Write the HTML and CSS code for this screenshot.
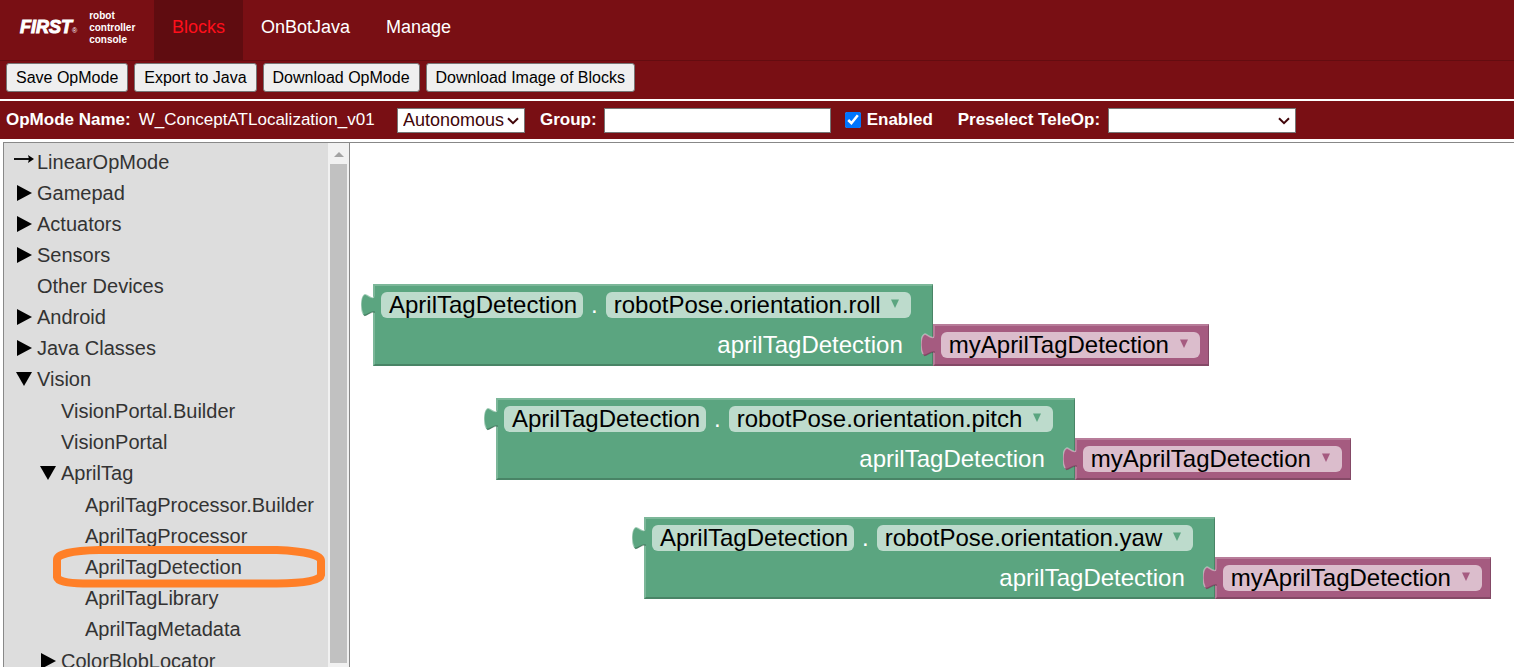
FILE: index.html
```html
<!DOCTYPE html>
<html lang="en">
<head>
<meta charset="utf-8">
<title>Blocks - robot controller console</title>
<link rel="stylesheet" href="styles.css">
</head>
<body>
<svg class="defs" aria-hidden="true">
  <symbol id="right" viewBox="0 0 16 16"><path d="M1 0L16 8L1 16Z"/></symbol>
  <symbol id="down" viewBox="0 0 16 16"><path d="M0 1H16L8 15Z"/></symbol>
  <symbol id="chevron" viewBox="0 0 12 8"><path d="M1 1.3L6 6.2L11 1.3" fill="none" stroke="currentColor" stroke-width="2"/></symbol>
  <symbol id="caret" viewBox="0 0 10 10"><path d="M1 0.5H9L5 9Z"/></symbol>
  <symbol id="tab" viewBox="0 0 14 26"><path d="M14 4C12 8 8 3 4 2C1 3 0 8 0 13C0 18 1 23 4 24C8 23 12 18 14 21Z"/><path d="M13 5C10 7 7 3 4 2C1 3 0 8 0 13C0 17 1 20 2 22" fill="none" stroke="#fff" stroke-opacity=".4" stroke-width="1.5"/><path d="M3 23.5C7 23 11 18 14 20.5" fill="none" stroke="#000" stroke-opacity=".22" stroke-width="1.5"/></symbol>
</svg>
<header class="header">
  <nav class="nav">
    <a class="brand" href="#"><span class="logo">FIRST<small>®</small></span><span class="product">robot<br>controller<br>console</span></a>
    <a class="tab active" href="#">Blocks</a>
    <a class="tab" href="#">OnBotJava</a>
    <a class="tab" href="#">Manage</a>
  </nav>
  <div class="actions">
    <button>Save OpMode</button>
    <button>Export to Java</button>
    <button>Download OpMode</button>
    <button>Download Image of Blocks</button>
  </div>
</header>
<form class="options">
  <div class="name"><b>OpMode Name:</b><span>W_ConceptATLocalization_v01</span></div>
  <span class="pick flavor"><select aria-label="Flavor"><option>Autonomous</option></select><svg><use href="#chevron"/></svg></span>
  <label class="strong" for="group">Group:</label>
  <input class="group" id="group" type="text">
  <input class="check" id="enabled" type="checkbox" checked>
  <label class="strong enabled" for="enabled">Enabled</label>
  <label class="strong" for="teleop">Preselect TeleOp:</label>
  <span class="pick teleop"><select id="teleop"><option></option></select><svg><use href="#chevron"/></svg></span>
</form>
<main class="main">
  <aside class="toolbox">
    <ul class="tree">
      <li><div class="row"><svg class="arrow" viewBox="0 0 20 8"><path d="M0 4H17" stroke="#111" stroke-width="2"/><path d="M14 0L20 4L14 8L15 4Z"/></svg>LinearOpMode</div></li>
      <li><div class="row"><svg><use href="#right"/></svg>Gamepad</div></li>
      <li><div class="row"><svg><use href="#right"/></svg>Actuators</div></li>
      <li><div class="row"><svg><use href="#right"/></svg>Sensors</div></li>
      <li><div class="row">Other Devices</div></li>
      <li><div class="row"><svg><use href="#right"/></svg>Android</div></li>
      <li><div class="row"><svg><use href="#right"/></svg>Java Classes</div></li>
      <li><div class="row"><svg><use href="#down"/></svg>Vision</div>
        <ul>
          <li><div class="row">VisionPortal.Builder</div></li>
          <li><div class="row">VisionPortal</div></li>
          <li><div class="row"><svg><use href="#down"/></svg>AprilTag</div>
            <ul>
              <li><div class="row">AprilTagProcessor.Builder</div></li>
              <li><div class="row">AprilTagProcessor</div></li>
              <li><div class="row">AprilTagDetection<svg class="ring" viewBox="0 0 272 42"><path d="M46 4H224Q268 6 268 15V29Q267 37 224 37.500H30Q5 37 4 31V14Q4 5 46 4Z" fill="none" stroke="#ff7f27" stroke-width="8"/></svg></div></li>
              <li><div class="row">AprilTagLibrary</div></li>
              <li><div class="row">AprilTagMetadata</div></li>
            </ul>
          </li>
          <li><div class="row"><svg><use href="#right"/></svg>ColorBlobLocator</div></li>
        </ul>
      </li>
    </ul>
    <div class="scrollbar"><svg viewBox="0 0 10 5"><path d="M5 0L10 5H0Z" fill="#a3a3a3"/></svg><div class="thumb"></div></div>
  </aside>
  <section class="workspace">
    <div class="block roll">
      <div class="getter"><svg class="plug"><use href="#tab"/></svg>
        <div class="fields"><span class="field">AprilTagDetection</span><span class="dot">.</span><span class="field drop"><select aria-label="Property"><option>robotPose.orientation.roll</option></select><svg><use href="#caret"/></svg></span></div>
        <div class="argument">aprilTagDetection</div>
      </div>
      <div class="variable"><svg class="plug"><use href="#tab"/></svg><span class="field drop"><select aria-label="Variable"><option>myAprilTagDetection</option></select><svg><use href="#caret"/></svg></span></div>
    </div>
    <div class="block pitch">
      <div class="getter"><svg class="plug"><use href="#tab"/></svg>
        <div class="fields"><span class="field">AprilTagDetection</span><span class="dot">.</span><span class="field drop"><select aria-label="Property"><option>robotPose.orientation.pitch</option></select><svg><use href="#caret"/></svg></span></div>
        <div class="argument">aprilTagDetection</div>
      </div>
      <div class="variable"><svg class="plug"><use href="#tab"/></svg><span class="field drop"><select aria-label="Variable"><option>myAprilTagDetection</option></select><svg><use href="#caret"/></svg></span></div>
    </div>
    <div class="block yaw">
      <div class="getter"><svg class="plug"><use href="#tab"/></svg>
        <div class="fields"><span class="field">AprilTagDetection</span><span class="dot">.</span><span class="field drop"><select aria-label="Property"><option>robotPose.orientation.yaw</option></select><svg><use href="#caret"/></svg></span></div>
        <div class="argument">aprilTagDetection</div>
      </div>
      <div class="variable"><svg class="plug"><use href="#tab"/></svg><span class="field drop"><select aria-label="Variable"><option>myAprilTagDetection</option></select><svg><use href="#caret"/></svg></span></div>
    </div>
  </section>
</main>
</body>
</html>
```
FILE: styles.css
```css
* { box-sizing: border-box; }
body {
  margin: 0;
  height: 100vh;
  overflow: hidden;
  display: flex;
  flex-direction: column;
  background: #fff;
  font-family: "Liberation Sans", Arial, sans-serif;
  color: #333;
}
.defs { position: absolute; width: 0; height: 0; }
.header, .options { background: #790f14; color: #fff; }
.nav { display: flex; height: 61px; border-bottom: 1px solid #640c10; }
.nav a { color: #fff; text-decoration: none; }
.brand { display: flex; align-items: center; gap: 12px; width: 154px; padding-left: 20px; padding-bottom: 5px; }
.logo { font-size: 18px; font-weight: bold; font-style: italic; -webkit-text-stroke: 1px #fff; }
.logo small { font-size: 7px; font-style: normal; font-weight: normal; -webkit-text-stroke: 0; }
.product { font-size: 10px; line-height: 12px; font-weight: bold; }
.tab { display: flex; align-items: center; padding: 0 18px 5px; font-size: 18px; }
.nav .active { background: #5f0c10; color: #ff0f1b; }
.actions { display: flex; gap: 6px; padding: 2px 6px 7px; }
.actions button {
  height: 29px;
  padding: 0 9px;
  border: 1px solid #767676;
  border-radius: 3px;
  background: #efefef;
  color: #000;
  font: 16px "Liberation Sans", Arial, sans-serif;
}
.options { display: flex; align-items: center; height: 38px; margin-top: 2px; padding-left: 6px; font-size: 17px; }
.name { display: flex; gap: 8px; width: 376px; white-space: nowrap; }
.strong { font-weight: bold; }
.pick { position: relative; color: #400509; }
.pick select {
  width: 100%;
  height: 25px;
  padding: 0 5px;
  appearance: none;
  border: 1px solid #767676;
  border-radius: 0;
  background: #fff;
  color: inherit;
  font: 18px "Liberation Sans", Arial, sans-serif;
}
.pick svg { position: absolute; right: 6px; top: 9px; width: 12px; height: 8px; pointer-events: none; }
.flavor { width: 128px; margin: 0 15px; }
.group { width: 227px; height: 25px; margin: 0 14px 0 7px; border: 1px solid #767676; background: #fff; }
.check { width: 16px; height: 16px; margin: 0 6px 0 0; }
.enabled { margin-right: 25px; }
.teleop { width: 188px; margin-left: 8px; }
.main { flex: 1; min-height: 0; display: flex; padding: 3px 0 0 3px; }
.toolbox { display: flex; width: 347px; border: 1px solid #888; border-bottom: 0; background: #ddd; overflow: hidden; }
.tree { flex: 1; padding: 4px 0 0 9px; font-size: 20px; white-space: nowrap; }
.tree, .tree ul { margin: 0; list-style: none; }
.tree ul { padding: 1px 0 1px 24px; }
.row { position: relative; height: 31px; line-height: 31px; padding-left: 24px; }
.row svg { position: absolute; left: 3px; top: 7px; width: 16px; height: 16px; fill: #000; }
.row .arrow { left: 1px; top: 8px; width: 20px; height: 8px; }
.row .ring { left: -8px; top: -6px; width: 272px; height: 42px; }
.scrollbar { display: flex; flex-direction: column; align-items: center; width: 21px; padding: 9px 2px 4px; background: #f1f1f1; }
.scrollbar svg { width: 10px; height: 5px; margin-bottom: 7px; }
.thumb { flex: 1; width: 17px; background: #c1c1c1; }
.workspace { position: relative; flex: 1; border-top: 1px solid #888; }
.block { position: absolute; display: flex; align-items: flex-end; font-size: 24px; line-height: 26px; white-space: nowrap; }
.roll { left: 23px; top: 141px; }
.pitch { left: 146px; top: 255px; }
.yaw { left: 294px; top: 374px; }
.getter, .variable { position: relative; border: 2px solid; border-width: 2px 1px 2px 2px; }
.getter { height: 82px; padding: 6px 21px 0 6px; background: #5ba580; border-color: #7cb799 #498466 #498466 #7cb799; color: #fff; }
.variable { height: 42px; padding: 6px 8px 0 6px; background: #a55b80; border-color: #b77c99 #844966 #844966 #b77c99; }
.plug { position: absolute; left: -14px; top: 6px; width: 14px; height: 26px; }
.getter .plug { fill: #5ba580; }
.variable .plug { fill: #a55b80; }
.fields { display: flex; }
.field { height: 26px; padding: 0 6px 0 8px; border-radius: 6px; background: #bddbcc; color: #000; }
.variable .field { background: #dbbdcc; }
.drop { position: relative; display: block; padding-right: 0; }
.field select {
  display: block;
  height: 26px;
  padding: 0 30px 0 0;
  appearance: none;
  border: 0;
  background: transparent;
  color: #000;
  font: 24px/26px "Liberation Sans", Arial, sans-serif;
}
.field svg { position: absolute; right: 11px; top: 7px; width: 10px; height: 10px; pointer-events: none; }
.getter .field svg { fill: #5ba580; }
.variable .field svg { fill: #a55b80; }
.dot { padding: 0 8px; }
.argument { padding: 14px 8px 0 0; text-align: right; }
```
